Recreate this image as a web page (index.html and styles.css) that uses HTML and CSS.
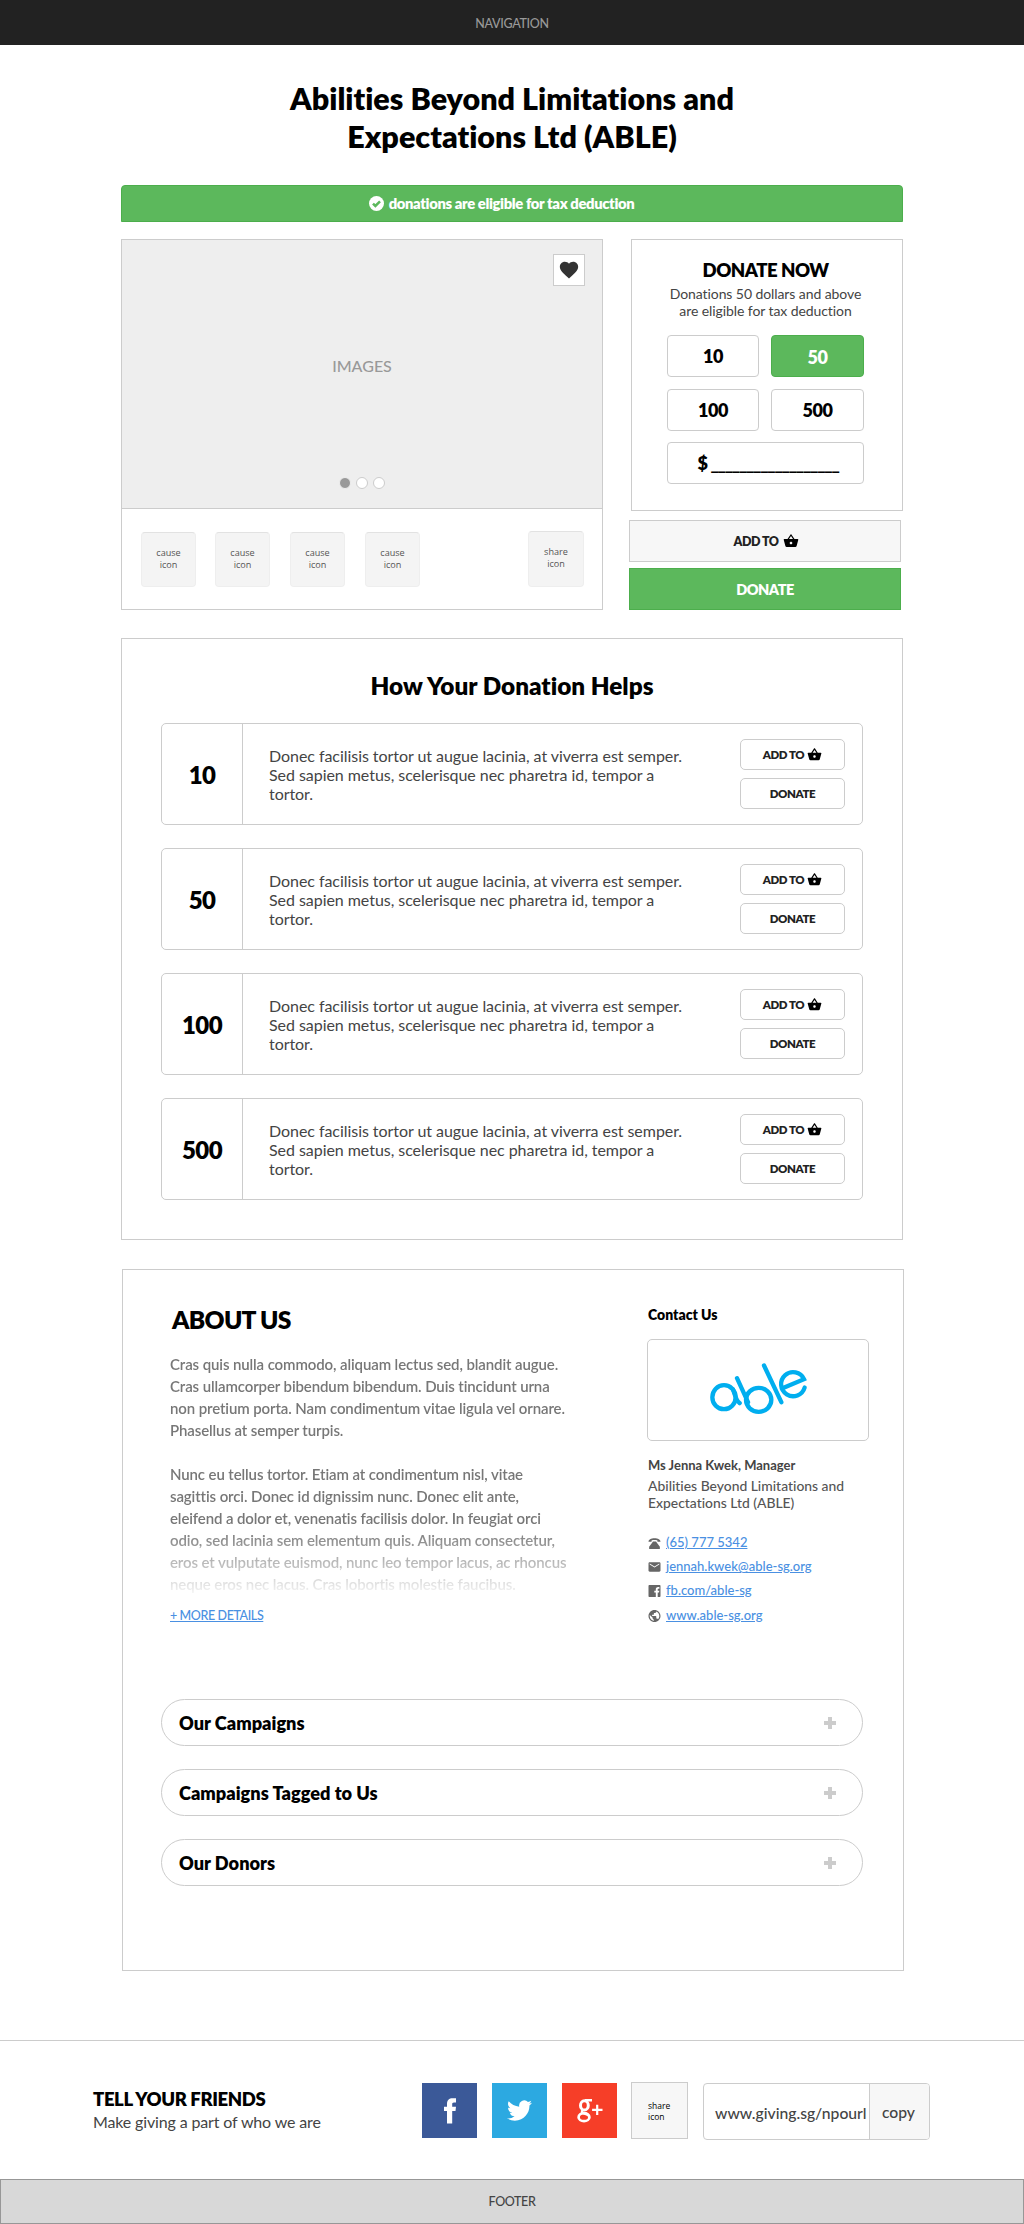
FILE: index.html
```html
<!DOCTYPE html>
<html lang="en">
<head>
<meta charset="utf-8">
<title>Abilities Beyond Limitations and Expectations Ltd (ABLE)</title>
<link rel="stylesheet" href="styles.css">
</head>
<body>
<svg class="sprite" aria-hidden="true">
  <symbol id="basket" viewBox="0 0 24 24"><path d="M17.21 9l-4.38-6.56c-.19-.28-.51-.42-.83-.42-.32 0-.64.14-.83.43L6.79 9H2c-.55 0-1 .45-1 1 0 .09.01.18.04.27l2.54 9.27c.23.84 1 1.46 1.92 1.46h13c.92 0 1.69-.62 1.93-1.46l2.54-9.27L23 10c0-.55-.45-1-1-1h-4.79zM9 9l3-4.4L15 9H9zm3 8c-1.1 0-2-.9-2-2s.9-2 2-2 2 .9 2 2-.9 2-2 2z"/></symbol>
</svg>

<nav class="topbar">NAVIGATION</nav>

<main class="page">
  <h1 class="title">Abilities Beyond Limitations and<br>Expectations Ltd (ABLE)</h1>

  <div class="banner">
    <svg class="banner-icon" viewBox="0 0 15 15"><circle cx="7.5" cy="7.5" r="7.5" fill="#fff"/><path d="M4 7.6l2.4 2.4L11 5.4" fill="none" stroke="#5cb85c" stroke-width="2.5"/></svg>
    <span class="banner-text">donations are eligible for tax deduction</span>
  </div>

  <div class="hero">
    <section class="gallery">
      <div class="gallery-image">
        <span class="gallery-label">IMAGES</span>
        <button class="like"><svg viewBox="0 0 24 24"><path d="M12 21.35l-1.45-1.32C5.4 15.36 2 12.28 2 8.5 2 5.42 4.42 3 7.5 3c1.74 0 3.41.81 4.5 2.09C13.09 3.81 14.76 3 16.5 3 19.58 3 22 5.42 22 8.5c0 3.78-3.4 6.86-8.55 11.54L12 21.35z"/></svg></button>
        <div class="dots"><i class="dot dot-on"></i><i class="dot"></i><i class="dot"></i></div>
      </div>
      <div class="tiles">
        <div class="tile">cause<br>icon</div>
        <div class="tile">cause<br>icon</div>
        <div class="tile">cause<br>icon</div>
        <div class="tile">cause<br>icon</div>
        <div class="tile tile-share">share<br>icon</div>
      </div>
    </section>

    <aside class="donate">
      <div class="donate-card">
        <h2 class="donate-title">DONATE NOW</h2>
        <p class="donate-note">Donations 50 dollars and above<br>are eligible for tax deduction</p>
        <div class="amounts">
          <button class="amount">10</button>
          <button class="amount amount-on">50</button>
          <button class="amount">100</button>
          <button class="amount">500</button>
          <button class="amount amount-custom"><span>$</span><span class="blank">__________________</span></button>
        </div>
      </div>
      <button class="cta">ADD TO <svg class="basket"><use href="#basket"/></svg></button>
      <button class="cta cta-green">DONATE</button>
    </aside>
  </div>

  <section class="helps">
    <h2 class="helps-title">How Your Donation Helps</h2>
    <div class="helps-list">
      <div class="help">
        <div class="help-amount">10</div>
        <p class="help-text">Donec facilisis tortor ut augue lacinia, at viverra est semper. Sed sapien metus, scelerisque nec pharetra id, tempor a tortor.</p>
        <div class="help-actions"><button class="small">ADD TO <svg class="basket"><use href="#basket"/></svg></button><button class="small">DONATE</button></div>
      </div>
      <div class="help">
        <div class="help-amount">50</div>
        <p class="help-text">Donec facilisis tortor ut augue lacinia, at viverra est semper. Sed sapien metus, scelerisque nec pharetra id, tempor a tortor.</p>
        <div class="help-actions"><button class="small">ADD TO <svg class="basket"><use href="#basket"/></svg></button><button class="small">DONATE</button></div>
      </div>
      <div class="help">
        <div class="help-amount">100</div>
        <p class="help-text">Donec facilisis tortor ut augue lacinia, at viverra est semper. Sed sapien metus, scelerisque nec pharetra id, tempor a tortor.</p>
        <div class="help-actions"><button class="small">ADD TO <svg class="basket"><use href="#basket"/></svg></button><button class="small">DONATE</button></div>
      </div>
      <div class="help">
        <div class="help-amount">500</div>
        <p class="help-text">Donec facilisis tortor ut augue lacinia, at viverra est semper. Sed sapien metus, scelerisque nec pharetra id, tempor a tortor.</p>
        <div class="help-actions"><button class="small">ADD TO <svg class="basket"><use href="#basket"/></svg></button><button class="small">DONATE</button></div>
      </div>
    </div>
  </section>

  <section class="about">
    <div class="about-cols">
      <div class="about-main">
        <h2 class="about-title">ABOUT US</h2>
        <div class="about-text">
          <p>Cras quis nulla commodo, aliquam lectus sed, blandit augue.<br>Cras ullamcorper bibendum bibendum. Duis tincidunt urna<br>non pretium porta. Nam condimentum vitae ligula vel ornare.<br>Phasellus at semper turpis.</p>
          <p>Nunc eu tellus tortor. Etiam at condimentum nisl, vitae<br>sagittis orci. Donec id dignissim nunc. Donec elit ante,<br>eleifend a dolor et, venenatis facilisis dolor. In feugiat orci<br>odio, sed lacinia sem elementum quis. Aliquam consectetur,<br>eros et vulputate euismod, nunc leo tempor lacus, ac rhoncus<br>neque eros nec lacus. Cras lobortis molestie faucibus.</p>
        </div>
        <a class="link more" href="#">+ MORE DETAILS</a>
      </div>
      <div class="contact">
        <h3 class="contact-title">Contact Us</h3>
        <div class="logo">
          <svg class="logo-mark" viewBox="202 33 300 164" fill="none" stroke="#00aeef" stroke-width="13" stroke-linecap="round">
            <ellipse cx="250" cy="141" rx="35" ry="36"/>
            <path d="M277 118C283 134 286 152 297 159M289 84L322 156M370 46L422 156"/>
            <ellipse cx="354" cy="149" rx="38" ry="36"/>
            <path d="M429 113L490 87A36 36 0 1 0 492 112"/>
          </svg>
        </div>
        <p class="person">Ms Jenna Kwek, Manager</p>
        <p class="org">Abilities Beyond Limitations and<br>Expectations Ltd (ABLE)</p>
        <ul class="links">
          <li><svg class="ico" viewBox="0 0 13 13"><path d="M0 5.2C0 2.8 2.6 1.3 6.5 1.3S13 2.8 13 5.2H9.7V3.8C8 3.1 5 3.1 3.3 3.8v1.4z"/><path d="M4.9 5h3.2l4.2 5.5V13H.7v-2.5z"/></svg><a class="link" href="#">(65) 777 5342</a></li>
          <li><svg class="ico" viewBox="2 2 20 20"><path d="M20 4H4c-1.1 0-1.99.9-1.99 2L2 18c0 1.1.9 2 2 2h16c1.1 0 2-.9 2-2V6c0-1.1-.9-2-2-2zm0 4l-8 5-8-5V6l8 5 8-5v2z"/></svg><a class="link" href="#">jennah.kwek@able-sg.org</a></li>
          <li><svg class="ico" viewBox="0 0 12 12"><path d="M1 0h10c.6 0 1 .4 1 1v10c0 .6-.4 1-1 1H9.2V7.6h1.3l.3-1.8H9.2V4.6c0-.5.2-.9.9-.9h.8V2.1H9.6C8 2.1 7.3 3 7.3 4.4v1.4H5.8v1.8h1.5V12H1c-.6 0-1-.4-1-1V1c0-.6.4-1 1-1z"/></svg><a class="link" href="#">fb.com/able-sg</a></li>
          <li><svg class="ico" viewBox="2 2 20 20"><path d="M12 2C6.48 2 2 6.48 2 12s4.48 10 10 10 10-4.48 10-10S17.52 2 12 2zm-1 17.93c-3.95-.49-7-3.85-7-7.93 0-.62.08-1.21.21-1.79L9 15v1c0 1.1.9 2 2 2v1.93zm6.9-2.54c-.26-.81-1-1.39-1.9-1.39h-1v-3c0-.55-.45-1-1-1H8v-2h2c.55 0 1-.45 1-1V7h2c1.1 0 2-.9 2-2v-.41c2.93 1.19 5 4.06 5 7.41 0 2.08-.8 3.97-2.1 5.39z"/></svg><a class="link" href="#">www.able-sg.org</a></li>
        </ul>
      </div>
    </div>
    <div class="accordion">
      <div class="pill"><span>Our Campaigns</span><i class="plus"></i></div>
      <div class="pill"><span>Campaigns Tagged to Us</span><i class="plus"></i></div>
      <div class="pill"><span>Our Donors</span><i class="plus"></i></div>
    </div>
  </section>
</main>

<section class="tell">
  <div class="tell-copy">
    <h2 class="tell-title">TELL YOUR FRIENDS</h2>
    <p class="tell-sub">Make giving a part of who we are</p>
  </div>
  <div class="social">
    <a class="soc soc-fb"><svg width="12" height="26" viewBox="0 0 12 26"><path d="M3 25.6V13H0V8.7h3V6C3 2.2 5 .2 8.7.2H12v4.3h-2c-1.5 0-1.8.7-1.8 1.8v2.4H12L11.5 13H8.2v12.6z"/></svg></a>
    <a class="soc soc-tw"><svg width="25" height="25" viewBox="0 0 24 24"><path d="M23.953 4.57a10 10 0 01-2.825.775 4.958 4.958 0 002.163-2.723c-.951.555-2.005.959-3.127 1.184a4.92 4.92 0 00-8.384 4.482C7.69 8.095 4.067 6.13 1.64 3.162a4.822 4.822 0 00-.666 2.475c0 1.71.87 3.213 2.188 4.096a4.904 4.904 0 01-2.228-.616v.06a4.923 4.923 0 003.946 4.827 4.996 4.996 0 01-2.212.085 4.936 4.936 0 004.604 3.417 9.867 9.867 0 01-6.102 2.105c-.39 0-.779-.023-1.17-.067a13.995 13.995 0 007.557 2.209c9.053 0 13.998-7.496 13.998-13.985 0-.21 0-.42-.015-.63A9.935 9.935 0 0024 4.59z"/></svg></a>
    <a class="soc soc-gp"><svg class="gp" width="26" height="24" viewBox="0 0 26 24"><ellipse cx="7.4" cy="6.4" rx="3.9" ry="4.6" stroke-width="3"/><ellipse cx="7" cy="18.2" rx="5.4" ry="4" stroke-width="2.7"/><path d="M8 1.3h7M6 10.8c-2 1.8-1.2 2.8 1.4 3.7 2.4.8 4 1.3 4.6 2.5" stroke-width="2.4"/><path d="M20.2 5.8v10.2M15.1 10.9h10.4" stroke-width="2.2"/></svg></a>
    <a class="soc-share">share<br>icon</a>
    <div class="url"><span class="url-text">www.giving.sg/npourl</span><button class="url-copy">copy</button></div>
  </div>
</section>

<footer class="footer">FOOTER</footer>
</body>
</html>
```
FILE: styles.css
```css
* { box-sizing: border-box; }

body {
  margin: 0;
  background: #fff;
  color: #444;
  font-family: Lato, sans-serif;
  font-variant-ligatures: none;
}

h1, h2, h3, p, ul { margin: 0; padding: 0; }
h1, h2, h3 { color: #000; font-weight: 800; }
button {
  padding: 0;
  border: 1px solid #ccc;
  background: #fff;
  color: #000;
  font-family: inherit;
}
.sprite { display: none; }

.topbar {
  height: 45px;
  padding-top: 1px;
  background: #222;
  color: #999;
  font-size: 12.5px;
  font-weight: 500;
  line-height: 45px;
  letter-spacing: -.3px;
  text-align: center;
}

.page { width: 782px; margin: 0 auto; }

.title {
  margin-top: 34px;
  font-size: 30.5px;
  line-height: 38px;
  text-align: center;
}

.banner {
  display: flex;
  align-items: center;
  justify-content: center;
  gap: 5px;
  height: 37px;
  margin-top: 30px;
  padding-right: 21px;
  border: 1px solid #4cae4c;
  border-radius: 4px 4px 0 0;
  background: #5cb85c;
  color: #fff;
  font-size: 14.8px;
  font-weight: 800;
  letter-spacing: -.37px;
}
.banner-icon { width: 15px; height: 15px; }
.banner-text { padding-bottom: 2px; }

/* Gallery and donation box */
.hero {
  display: flex;
  justify-content: space-between;
  margin-top: 17px;
}
.gallery {
  width: 482px;
  height: 371px;
  border: 1px solid #ccc;
}
.gallery-image {
  position: relative;
  display: flex;
  align-items: center;
  justify-content: center;
  height: 269px;
  padding-bottom: 17px;
  border-bottom: 1px solid #ccc;
  background: #eee;
}
.gallery-label {
  color: #999;
  font-size: 16px;
  font-weight: 500;
}
.like {
  position: absolute;
  top: 14px;
  right: 17px;
  width: 32px;
  height: 32px;
}
.like svg {
  display: block;
  width: 22px;
  height: 22px;
  margin: 4px;
  fill: #333;
}
.dots {
  position: absolute;
  bottom: 19px;
  left: 216.6px;
  display: flex;
  gap: 5.3px;
}
.dot {
  width: 12px;
  height: 12px;
  border: 1px solid #ccc;
  border-radius: 50%;
  background: #fff;
}
.dot-on {
  border-color: #eee;
  background: #999;
}
.tiles {
  display: flex;
  gap: 20px;
  padding: 23px 18px 0 19px;
}
.tile {
  width: 55px;
  height: 55px;
  padding-top: 14px;
  border: 1px solid #eee;
  border-top-color: #e2e2e2;
  border-radius: 4px;
  background: #f4f4f4;
  color: #555;
  font: 9.1px/12px "Open Sans", sans-serif;
  text-align: center;
}
.tile:first-child { margin-right: -1px; }
.tile-share {
  width: 56px;
  height: 56px;
  margin: -1px 0 0 auto;
}

.donate { width: 274px; }
.donate-card {
  width: 272px;
  height: 272px;
  margin-left: 2px;
  padding: 18px 38px 0 35px;
  border: 1px solid #ccc;
}
.donate-title {
  font-size: 18.6px;
  line-height: 24px;
  letter-spacing: -.5px;
  text-align: center;
}
.donate-note {
  margin: 3px -10px 0;
  font-size: 14px;
  line-height: 17px;
  letter-spacing: -.08px;
  text-align: center;
}
.amounts {
  display: grid;
  grid-template-columns: 92px 93px;
  grid-auto-rows: 42px;
  gap: 12px;
  margin-top: 16px;
}
.amount {
  height: 42px;
  border-radius: 4px;
  font-size: 18px;
  font-weight: 800;
  letter-spacing: -.5px;
}
.amount-on {
  padding-top: 2px;
  border-color: #4cae4c;
  background: #5cb85c;
  color: #fff;
}
.amount-custom {
  grid-column: 1 / 3;
  display: flex;
  justify-content: center;
  gap: 3px;
  margin-top: -1px;
  padding: 9px 0 0 5px;
}
.blank {
  font-weight: 700;
  letter-spacing: -1.28px;
}
.basket { fill: #000; }
.cta {
  display: flex;
  align-items: center;
  justify-content: center;
  gap: 4px;
  width: 272px;
  height: 42px;
  margin-top: 9px;
  padding-left: 2px;
  background: #f7f7f7;
  color: #222;
  font-size: 12.5px;
  font-weight: 800;
  letter-spacing: -.5px;
}
.cta .basket { width: 16px; height: 16px; }
.cta-green {
  margin-top: 6px;
  padding-left: 0;
  border-color: #4cae4c;
  background: #5cb85c;
  color: #fff;
  font-size: 14.5px;
}

/* How your donation helps */
.helps {
  height: 602px;
  margin-top: 28px;
  padding: 32px 39px 0;
  border: 1px solid #ccc;
}
.helps-title {
  font-size: 24.3px;
  line-height: 30px;
  text-align: center;
}
.helps-list {
  display: grid;
  gap: 23px;
  margin-top: 22px;
}
.help {
  display: flex;
  align-items: center;
  height: 102px;
  padding-right: 17px;
  border: 1px solid #ccc;
  border-radius: 5px;
}
.help-amount {
  width: 81px;
  height: 100px;
  border-right: 1px solid #ccc;
  color: #000;
  font-size: 24px;
  font-weight: 800;
  line-height: 101px;
  letter-spacing: -.6px;
  text-align: center;
}
.help-text {
  width: 428px;
  margin-left: 26px;
  font-size: 16px;
  line-height: 19px;
  letter-spacing: -.05px;
}
.help-actions {
  display: grid;
  gap: 8px;
  width: 105px;
  margin-left: auto;
}
.small {
  display: flex;
  align-items: center;
  justify-content: center;
  gap: 3px;
  height: 31px;
  border-radius: 5px;
  color: #222;
  font-size: 11.5px;
  font-weight: 800;
  letter-spacing: -.42px;
}
.small .basket { width: 15px; height: 15px; }

/* About */
.about {
  width: 782px;
  height: 702px;
  margin: 29px 0 0 1px;
  padding: 34px 34px 0 38px;
  border: 1px solid #ccc;
}
.about-cols {
  display: flex;
  height: 395px;
}
.about-main { width: 486px; padding-left: 9px; }
.about-title {
  margin-left: 2px;
  padding-top: 1px;
  font-size: 24.6px;
  line-height: 30px;
  letter-spacing: -.7px;
}
.about-text {
  margin-top: 18px;
  color: #777;
  font-size: 15px;
  font-weight: 600;
  line-height: 22px;
  letter-spacing: -.11px;
  -webkit-mask-image: linear-gradient(#000 175px, transparent 246px);
  mask-image: linear-gradient(#000 175px, transparent 246px);
}
.about-text p + p { margin-top: 22px; }
.link {
  color: #4a90e2;
  font-size: 13px;
  font-weight: 500;
  text-decoration: underline;
}
.more {
  display: block;
  margin-top: 13px;
  font-size: 12.5px;
  line-height: 16px;
  letter-spacing: -.4px;
}
.contact { width: 222px; padding-top: 2px; }
.contact-title {
  padding-left: 1px;
  font-size: 14px;
  line-height: 18px;
}
.logo {
  display: flex;
  align-items: center;
  justify-content: center;
  height: 102px;
  margin-top: 15px;
  padding: 0 1px 3px 0;
  border: 1px solid #ccc;
  border-radius: 5px;
}
.logo-mark { width: 100px; height: 55px; }
.person {
  margin-top: 15px;
  padding-left: 1px;
  font-size: 13px;
  font-weight: 700;
  line-height: 18px;
}
.org {
  margin-top: 3px;
  padding-left: 1px;
  color: #555;
  font-size: 13.9px;
  font-weight: 500;
  line-height: 17px;
  white-space: nowrap;
}
.links {
  margin-top: 19px;
  list-style: none;
}
.links li {
  display: flex;
  align-items: center;
  gap: 5px;
  height: 24px;
  padding-left: 1px;
}
.links li:last-child { height: 26px; }
.ico {
  width: 13px;
  height: 12px;
  margin-top: 2px;
  fill: #666;
}
.accordion { display: grid; gap: 23px; width: 702px; }
.pill {
  display: flex;
  align-items: center;
  justify-content: space-between;
  height: 47px;
  padding: 0 26px 0 17px;
  border: 1px solid #ccc;
  border-radius: 24px;
  color: #000;
  font-size: 18.2px;
  font-weight: 800;
}
.plus {
  width: 12px;
  height: 12px;
  background:
    linear-gradient(#ccc, #ccc) center / 12px 4px no-repeat,
    linear-gradient(#ccc, #ccc) center / 4px 12px no-repeat;
}

/* Share strip */
.tell {
  display: flex;
  justify-content: space-between;
  height: 139px;
  margin-top: 69px;
  padding: 41px 94px 0 92px;
  border-top: 1px solid #ccc;
}
.tell-copy { padding-top: 5px; }
.tell-title {
  padding-left: 1px;
  font-size: 18.5px;
  line-height: 24px;
  letter-spacing: -.38px;
}
.tell-sub {
  padding: 1px 0 0 1px;
  font-size: 16px;
  line-height: 20px;
  letter-spacing: -.14px;
}
.social { display: flex; }
.soc {
  display: flex;
  align-items: center;
  justify-content: center;
  width: 55px;
  height: 55px;
  margin: 1px 15px 0 0;
  fill: #fff;
}
.soc-fb { background: #3b5998; }
.soc-tw { background: #2ca9e1; }
.soc-gp { margin-right: 14px; background: #f63e28; }
.gp { fill: none; stroke: #fff; }
.soc-share {
  width: 57px;
  height: 57px;
  padding: 17px 0 0 16px;
  border: 1px solid #ccc;
  background: #f7f7f7;
  color: #000;
  font: 8.5px/11px "Open Sans", sans-serif;
}
.url {
  display: flex;
  width: 227px;
  height: 57px;
  margin: 1px 0 0 15px;
  border: 1px solid #ccc;
  border-radius: 4px;
  overflow: hidden;
  line-height: 58px;
}
.url-text {
  width: 165px;
  padding-left: 11px;
  font-size: 15.7px;
  font-weight: 500;
  white-space: nowrap;
}
.url-copy {
  flex: 1;
  padding-right: 2px;
  border-width: 0 0 0 1px;
  background: #f7f7f7;
  color: #444;
  font-size: 15.7px;
  font-weight: 500;
}

.footer {
  height: 45px;
  border: 1px solid #979797;
  background: #d8d8d8;
  font-size: 12.5px;
  font-weight: 500;
  line-height: 44px;
  letter-spacing: -.4px;
  text-align: center;
}
```
